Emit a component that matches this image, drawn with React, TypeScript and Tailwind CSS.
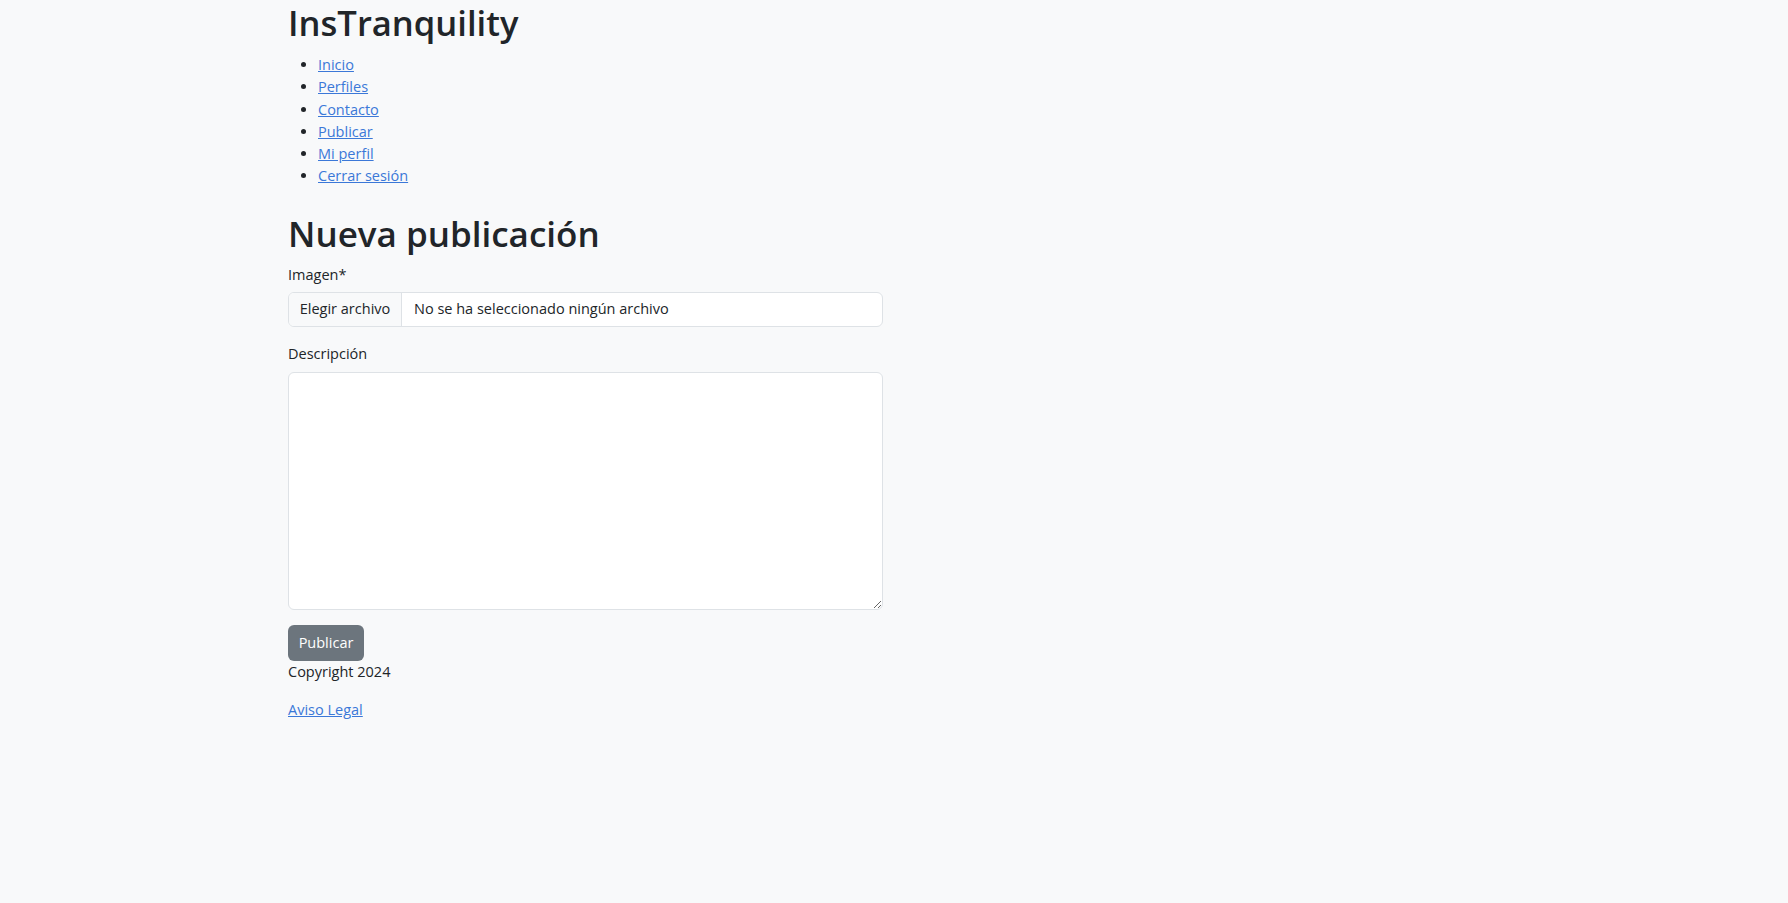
const navLinks = ["Inicio", "Perfiles", "Contacto", "Publicar", "Mi perfil", "Cerrar sesión"];

export default function App() {
  return (
    <div
      className="min-h-[903px] bg-[#f8f9fa] text-[#212529]"
      style={{ fontFamily: '"Open Sans", "Noto Sans", sans-serif' }}
    >
      <div className="ml-[288px] w-[595px] pb-10">
        <h1 className="pt-[2px] text-[34.6px] leading-[42px] font-semibold">InsTranquility</h1>

        <ul className="mt-[10px] list-disc pl-[30px] text-[14.5px] leading-[22.3px]">
          {navLinks.map((label) => (
            <li key={label}>
              <a href="#" className="text-[#3b78d8] underline">
                {label}
              </a>
            </li>
          ))}
        </ul>

        <h2 className="mt-[25px] text-[35px] leading-[42px] font-semibold">Nueva publicación</h2>

        <form className="text-[14.5px] leading-[22px]" onSubmit={(e) => e.preventDefault()}>
          <label className="mt-[9px] block">Imagen*</label>
          <div className="mt-[6px] flex h-[35px] overflow-hidden rounded-[6px] border border-[#dee2e6] bg-white">
            <div className="flex w-[113px] shrink-0 items-center justify-center border-r border-[#dee2e6] bg-[#f8f9fa]">
              Elegir archivo
            </div>
            <div className="flex items-center pl-[12px]">No se ha seleccionado ningún archivo</div>
          </div>

          <label className="mt-[16px] block">Descripción</label>
          <textarea className="mt-[7px] block h-[238px] w-full rounded-[6px] border border-[#dee2e6] bg-white px-3 py-2 outline-none" />

          <button
            type="submit"
            className="mt-[15px] block h-[36px] w-[76px] rounded-[6px] bg-[#6c757d] text-white"
          >
            Publicar
          </button>
        </form>

        <footer className="text-[14.5px] leading-[22px]">
          <p>Copyright 2024</p>
          <a href="#" className="mt-[16px] inline-block text-[#3b78d8] underline">
            Aviso Legal
          </a>
        </footer>
      </div>
    </div>
  );
}
